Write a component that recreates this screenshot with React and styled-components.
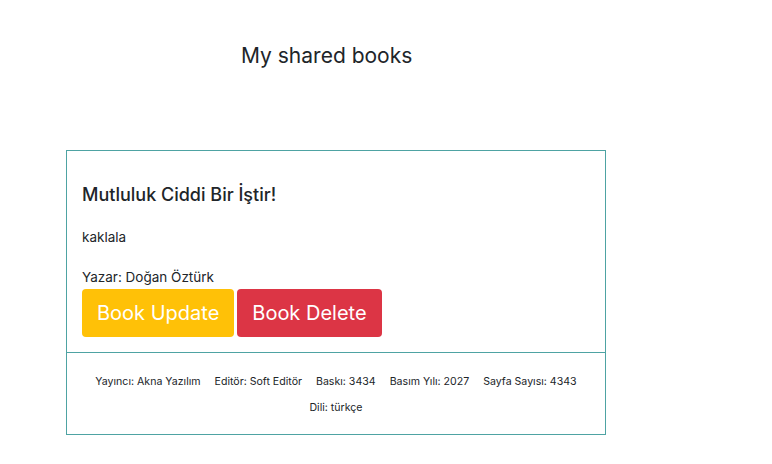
import React from 'react';
import styled, { createGlobalStyle } from 'styled-components';

const GlobalStyle = createGlobalStyle`
  body {
    margin: 0;
    background: #ffffff;
    font-family: Inter, "Noto Sans", sans-serif;
    color: #212529;
  }
`;

const book = {
  name: 'Mutluluk Ciddi Bir İştir!',
  description: 'kaklala',
  author: 'Doğan Öztürk',
  details: [
    'Yayıncı: Akna Yazılım',
    'Editör: Soft Editör',
    'Baskı: 3434',
    'Basım Yılı: 2027',
    'Sayfa Sayısı: 4343',
    'Dili: türkçe',
  ],
};

const App = () => {
  return (
    <Page>
      <GlobalStyle />
      <Heading>My shared books</Heading>
      <Card>
        <CardBody>
          <BookTitle>{book.name}</BookTitle>
          <Text>{book.description}</Text>
          <Author>Yazar: {book.author}</Author>
          <Buttons>
            <Button variant="warning">Book Update</Button>
            <Button variant="danger">Book Delete</Button>
          </Buttons>
        </CardBody>
        <CardFooter>
          {book.details.map((d) => (
            <Detail key={d}>{d}</Detail>
          ))}
        </CardFooter>
      </Card>
    </Page>
  );
};

const Page = styled.div`
  width: 772px;
  height: 464px;
  display: flex;
  flex-direction: column;
`;

const Heading = styled.h2`
  margin: 42px 0 0 0;
  padding-left: 241px;
  font-size: 21px;
  font-weight: 400;
  line-height: 28px;
  color: #212529;
`;

const Card = styled.div`
  margin: 80px 0 0 66px;
  width: 538px;
  border: 1px solid #4ea3a3;
  display: flex;
  flex-direction: column;
`;

const CardBody = styled.div`
  padding: 32px 15px 15px 15px;
  border-bottom: 1px solid #4ea3a3;
`;

const BookTitle = styled.h5`
  margin: 0 0 20px 0;
  font-size: 18px;
  font-weight: 500;
  line-height: 24px;
  color: #212529;
`;

const Text = styled.p`
  margin: 0 0 20px 0;
  font-size: 13.5px;
  line-height: 20px;
`;

const Author = styled.p`
  margin: 0 0 2px 0;
  font-size: 13.5px;
  line-height: 20px;
`;

const Buttons = styled.div`
  display: flex;
  gap: 3px;
`;

const Button = styled.button`
  height: 48px;
  padding: 0 15px;
  border: none;
  border-radius: 4px;
  font-family: inherit;
  font-size: 20px;
  color: #ffffff;
  background: ${(p) => (p.variant === 'danger' ? '#dc3545' : '#ffc107')};
`;

const CardFooter = styled.div`
  padding: 19px 20px 16px;
  display: flex;
  flex-wrap: wrap;
  justify-content: center;
  column-gap: 14px;
  row-gap: 6px;
`;

const Detail = styled.span`
  font-size: 10.6px;
  line-height: 20px;
  color: #212529;
`;

export default App;
